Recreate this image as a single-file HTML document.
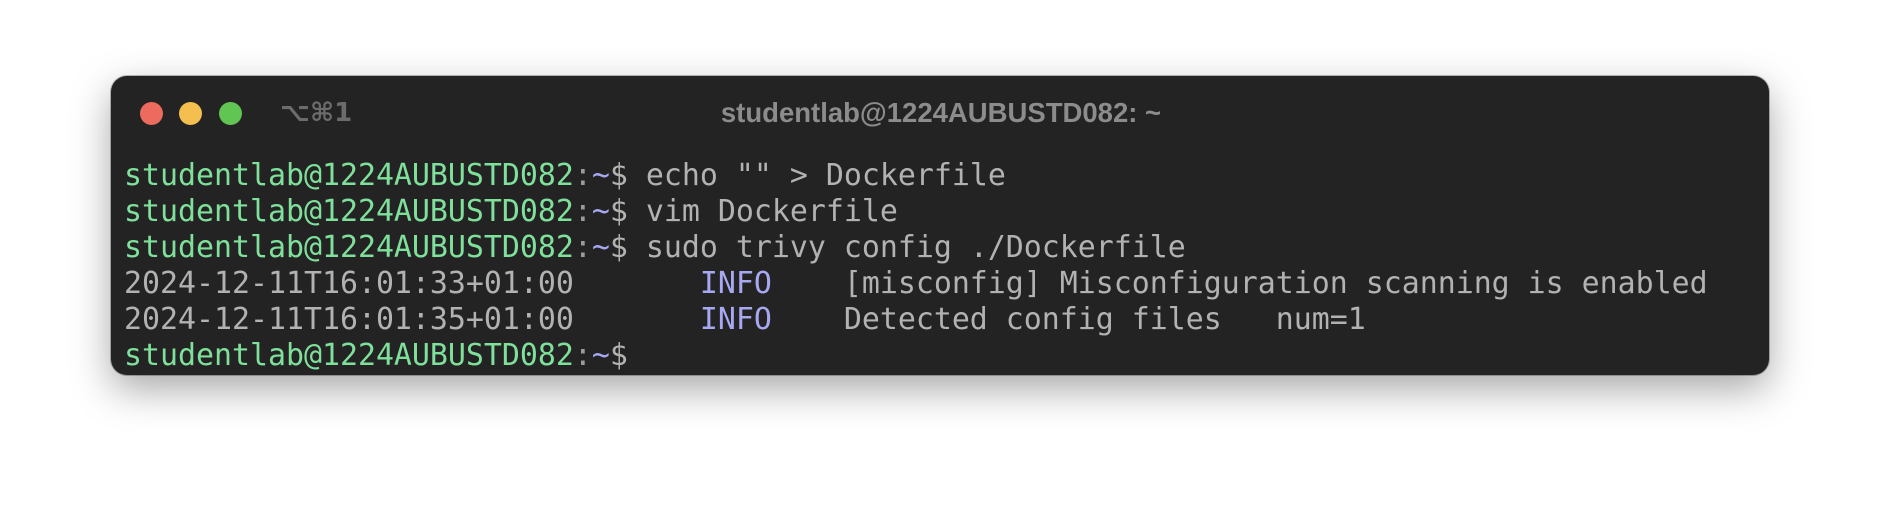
<!DOCTYPE html>
<html><head><meta charset="utf-8">
<style>
html,body{margin:0;padding:0;width:1882px;height:524px;background:#fff;overflow:hidden}
.win{position:absolute;left:111px;top:76px;width:1658px;height:299px;background:#232323;border-radius:16px;box-shadow:0 14px 40px rgba(0,0,0,0.35),0 0 0 1px rgba(0,0,0,0.25)}
.dot{position:absolute;top:102px;width:23px;height:23px;border-radius:50%}
.title{position:absolute;left:0;width:1882px;top:97px;text-align:center;font:bold 27.5px "Liberation Sans",sans-serif;color:#8c8c8c}
.tab{position:absolute;left:280px;top:98px;font:bold 26px "DejaVu Sans","Liberation Sans",sans-serif;color:#6c6c6c}
pre{position:absolute;left:124px;top:158px;margin:0;font-family:"DejaVu Sans Mono","Liberation Mono",monospace;font-size:29.9px;line-height:36px;color:#b2b2b2}
.g{color:#7fe09b}.b{color:#a8a8f2}.c{color:#9a9a9a}
</style></head><body>
<div class="win"></div>
<div class="dot" style="left:140px;background:#ec6a5e"></div>
<div class="dot" style="left:179px;background:#f4bf4f"></div>
<div class="dot" style="left:219px;background:#61c554"></div>
<div class="tab">⌥⌘1</div>
<div class="title">studentlab@1224AUBUSTD082: ~</div>
<pre><span class="g">studentlab@1224AUBUSTD082</span><span class="c">:</span><span class="b">~</span>$ echo "" &gt; Dockerfile
<span class="g">studentlab@1224AUBUSTD082</span><span class="c">:</span><span class="b">~</span>$ vim Dockerfile
<span class="g">studentlab@1224AUBUSTD082</span><span class="c">:</span><span class="b">~</span>$ sudo trivy config ./Dockerfile
2024-12-11T16:01:33+01:00       <span class="b">INFO</span>    [misconfig] Misconfiguration scanning is enabled
2024-12-11T16:01:35+01:00       <span class="b">INFO</span>    Detected config files   num=1
<span class="g">studentlab@1224AUBUSTD082</span><span class="c">:</span><span class="b">~</span>$</pre>
</body></html>
